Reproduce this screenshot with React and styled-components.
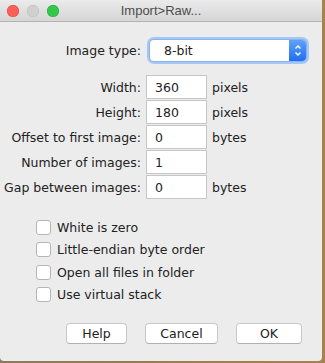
import React from 'react';
import styled, { createGlobalStyle } from 'styled-components';

const GlobalStyle = createGlobalStyle`
  html, body {
    margin: 0;
    padding: 0;
    background: #a5824f;
  }
  body {
    font-family: "DejaVu Sans", "Liberation Sans", sans-serif;
    font-size: 12.5px;
    color: #222;
  }
`;

const Desktop = styled.div`
  width: 325px;
  height: 363px;
  background: linear-gradient(90deg, #8c7a60 0%, #a5824f 100%);
  overflow: hidden;
`;

const Window = styled.div`
  width: 322px;
  height: 361px;
  background: #ececec;
  border-radius: 0 0 4px 4px;
  display: flex;
  flex-direction: column;
  overflow: hidden;
`;

const TitleBar = styled.div`
  height: 21px;
  border-bottom: 1px solid #b4b4b4;
  background: linear-gradient(#ebebeb, #d5d5d5);
  display: flex;
  align-items: center;
  position: relative;
  padding-left: 7px;
  gap: 8px;
`;

const Light = styled.span`
  width: 12px;
  height: 12px;
  border-radius: 50%;
  background: ${p => p.$color};
  box-shadow: inset 0 0 0 0.5px ${p => p.$edge};
`;

const Title = styled.div`
  position: absolute;
  left: 0;
  right: 0;
  text-align: center;
  color: #4c4c4c;
  font-family: "Liberation Sans", Arial, sans-serif;
  font-size: 13px;
  line-height: 21px;
`;

const Body = styled.div`
  display: flex;
  flex-direction: column;
  padding-top: 16px;
`;

const TypeRow = styled.div`
  display: flex;
  align-items: center;
  height: 24px;
`;

const TypeLabel = styled.div`
  width: 141px;
  text-align: right;
`;

const Select = styled.div`
  margin-left: 9px;
  width: 156px;
  height: 21px;
  background: #fff;
  border-radius: 4px;
  box-shadow: 0 0 0 1px #8db3ec, 0 0 0 3px #a6c7f5;
  display: flex;
  align-items: center;
  overflow: hidden;
`;

const SelectText = styled.span`
  flex: 1;
  padding-left: 14px;
`;

const Stepper = styled.span`
  width: 17px;
  height: 21px;
  background: linear-gradient(#5fa2f8, #1f6ff0);
  display: flex;
  align-items: center;
  justify-content: center;
`;

const Grid = styled.div`
  display: grid;
  grid-template-columns: 141px 61px auto;
  column-gap: 5px;
  row-gap: 1px;
  margin-top: 13px;
`;

const Label = styled.div`
  text-align: right;
  align-self: center;
`;

const Field = styled.div`
  height: 24px;
  box-sizing: border-box;
  background: #fff;
  border: 1px solid #c6c6c6;
  padding-left: 8px;
  display: flex;
  align-items: center;
`;

const Unit = styled.div`
  align-self: center;
`;

const Checks = styled.div`
  display: flex;
  flex-direction: column;
  gap: 8.6px;
  padding-left: 36px;
  margin-top: 21px;
`;

const CheckRow = styled.label`
  display: flex;
  align-items: center;
  gap: 6px;
  height: 14px;
`;

const Box = styled.span`
  width: 13px;
  height: 13px;
  background: #fff;
  border: 1px solid #b5b5b5;
  border-radius: 3px;
`;

const Buttons = styled.div`
  display: flex;
  padding-left: 66px;
  gap: 18px;
  margin-top: 21px;
`;

const Button = styled.div`
  width: ${p => p.$w}px;
  height: 21px;
  box-sizing: border-box;
  background: #fff;
  border: 1px solid #c8c8c8;
  border-bottom-color: #b0b0b0;
  border-radius: 4px;
  display: flex;
  align-items: center;
  justify-content: center;
`;

const rows = [
  ['Width:', '360', 'pixels'],
  ['Height:', '180', 'pixels'],
  ['Offset to first image:', '0', 'bytes'],
  ['Number of images:', '1', ''],
  ['Gap between images:', '0', 'bytes'],
];

const checks = ['White is zero', 'Little-endian byte order', 'Open all files in folder', 'Use virtual stack'];

export default function App() {
  return (
    <Desktop>
      <GlobalStyle />
      <Window>
        <TitleBar>
          <Light $color="#fc5f57" $edge="#df4744" />
          <Light $color="#d0d0d0" $edge="#bcbcbc" />
          <Light $color="#34c84a" $edge="#27a838" />
          <Title>Import&gt;Raw...</Title>
        </TitleBar>
        <Body>
          <TypeRow>
            <TypeLabel>Image type:</TypeLabel>
            <Select>
              <SelectText>8-bit</SelectText>
              <Stepper>
                <svg width="8" height="13" viewBox="0 0 8 13">
                  <path d="M1.5 4.5 L4 2 L6.5 4.5 M1.5 8.5 L4 11 L6.5 8.5" fill="none" stroke="#fff" strokeWidth="1.4" />
                </svg>
              </Stepper>
            </Select>
          </TypeRow>
          <Grid>
            {rows.map(([l, v, u]) => (
              <React.Fragment key={l}>
                <Label>{l}</Label>
                <Field>{v}</Field>
                <Unit>{u}</Unit>
              </React.Fragment>
            ))}
          </Grid>
          <Checks>
            {checks.map(c => (
              <CheckRow key={c}>
                <Box />
                {c}
              </CheckRow>
            ))}
          </Checks>
          <Buttons>
            <Button $w={61}>Help</Button>
            <Button $w={73}>Cancel</Button>
            <Button $w={66}>OK</Button>
          </Buttons>
        </Body>
      </Window>
    </Desktop>
  );
}
